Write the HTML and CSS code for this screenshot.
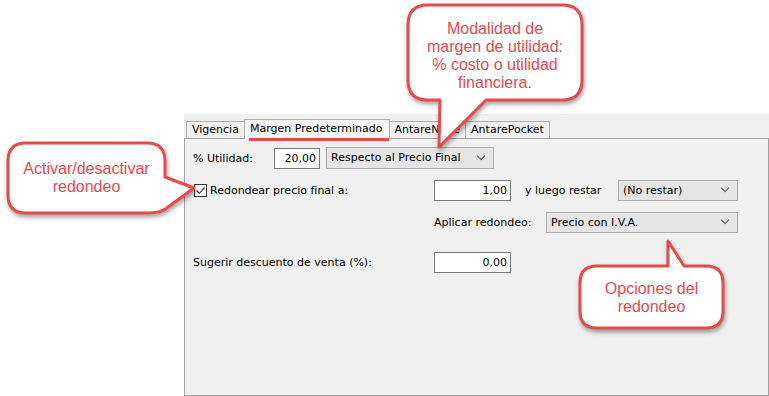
FILE: index.html
```html
<!DOCTYPE html>
<html lang="es">
<head>
<meta charset="utf-8">
<title>Margen Predeterminado</title>
<link rel="stylesheet" href="styles.css">
</head>
<body>
<div class="window">
  <div class="tabs">
    <div class="tab">Vigencia</div>
    <div class="tab active">Margen Predeterminado</div>
    <div class="tab">AntareNube</div>
    <div class="tab">AntarePocket</div>
  </div>
  <div class="panel">
    <div class="row r1">
      <span class="lbl w81">% Utilidad:</span>
      <span class="field w46">20,00</span>
      <span class="select w168 ml6">Respecto al Precio Final<i class="chev"></i></span>
    </div>
    <div class="row r2">
      <span class="lbl w241 chk"><span class="box"><svg width="11" height="11" viewBox="0 0 11 11"><path d="M1.5 5.5 L4.3 8.3 L9.7 2.6" fill="none" stroke="#333" stroke-width="1.1"/></svg></span>Redondear precio final a:</span>
      <span class="field w77">1,00</span>
      <span class="lbl w93 ml14">y luego restar</span>
      <span class="select w120">(No restar)<i class="chev"></i></span>
    </div>
    <div class="row r3">
      <span class="lbl w241"></span>
      <span class="lbl w112">Aplicar redondeo:</span>
      <span class="select w192">Precio con I.V.A.<i class="chev"></i></span>
    </div>
    <div class="row r4">
      <span class="lbl w241">Sugerir descuento de venta (%):</span>
      <span class="field w77">0,00</span>
    </div>
  </div>
</div>

<svg class="callouts" width="769" height="396" viewBox="0 0 769 396">
  <path d="M26,143 H147 Q165,143 165,161 V177 L194,188 L168,207 Q162,213 147,213 H26 Q8,213 8,195 V161 Q8,143 26,143 Z"/>
  <path d="M428,5 H562 Q582,5 582,25 V80 Q582,100 562,100 H486 L439,147 L440,100 H428 Q408,100 408,80 V25 Q408,5 428,5 Z"/>
  <path d="M597,266 H668 L668,241 L684,266 H706 Q723,266 723,283 V311 Q723,328 706,328 H597 Q580,328 580,311 V283 Q580,266 597,266 Z"/>
</svg>
<div class="note n1">Activar/desactivar<br>redondeo</div>
<div class="note n2">Modalidad de<br>margen de utilidad:<br>% costo o utilidad<br>financiera.</div>
<div class="note n3">Opciones del<br>redondeo</div>
</body>
</html>
```
FILE: styles.css
```css
html, body {
  margin: 0;
  padding: 0;
  background: #ffffff;
}
body {
  width: 769px;
  height: 396px;
  position: relative;
  overflow: hidden;
  font-family: "DejaVu Sans", sans-serif;
  font-size: 11px;
  color: #000;
}
.window {
  margin: 114px 0 0 184px;
  width: 585px;
  height: 282px;
  background: #f0f0f0;
  display: flex;
  flex-direction: column;
}
.tabs {
  display: flex;
  align-items: flex-end;
  height: 24px;
  padding-left: 2px;
  position: relative;
  z-index: 1;
}
.tab {
  height: 16px;
  line-height: 16px;
  padding: 0 5px;
  border: 1px solid #adadad;
  border-bottom: none;
  margin-right: -1px;
  background: #f0f0f0;
}
.tab.active {
  height: 19px;
  line-height: 18px;
  margin-bottom: -1px;
  padding: 0 6px 0 5px;
  background: #f7f7f7;
  position: relative;
}
.tab.active::after {
  content: "";
  position: absolute;
  left: 4px;
  right: 0;
  bottom: -2px;
  height: 3px;
  background: #e84a4a;
}
.panel {
  flex: 1;
  border: 1px solid #a0a0a0;
  padding: 8px 0 0 8px;
}
.row {
  display: flex;
  align-items: center;
}
.r1 { height: 22px; }
.r2 { height: 22px; margin-top: 10px; }
.r3 { height: 22px; margin-top: 10px; }
.r4 { height: 22px; margin-top: 18px; }
.lbl { display: block; white-space: nowrap; }
.w81 { width: 81px; }
.w241 { width: 241px; }
.w93 { width: 93px; }
.w112 { width: 112px; }
.ml14 { margin-left: 14px; }
.ml6 { margin-left: 6px; }
.chk { display: flex; align-items: center; }
.box {
  width: 11px;
  height: 11px;
  border: 1px solid #333;
  background: #fff;
  margin: 0 3px 0 1px;
  display: flex;
}
.field {
  border: 1px solid #7a7a7a;
  background: #fff;
  text-align: right;
  padding-right: 3px;
  box-sizing: border-box;
  height: 21px;
  line-height: 19px;
}
.w46 { width: 46px; }
.w77 { width: 77px; }
.select {
  height: 22px;
  line-height: 20px;
  border: 1px solid #adadad;
  background: #e5e5e5;
  box-sizing: border-box;
  padding-left: 4px;
  position: relative;
}
.r2 .select, .r3 .select { height: 21px; line-height: 19px; }
.w168 { width: 168px; }
.w120 { width: 120px; }
.w192 { width: 192px; }
.chev {
  position: absolute;
  right: 9px;
  top: 50%;
  width: 5px;
  height: 5px;
  margin-top: -5px;
  border-right: 1px solid #555;
  border-bottom: 1px solid #555;
  transform: rotate(45deg);
}
.callouts {
  position: absolute;
  left: 0;
  top: 0;
  z-index: 2;
  pointer-events: none;
  filter: drop-shadow(1px 3px 2px rgba(0,0,0,0.35));
}
.callouts path {
  fill: #ffffff;
  stroke: #e84a4a;
  stroke-width: 3;
  stroke-linejoin: round;
}
.note {
  position: absolute;
  z-index: 3;
  font-family: "Liberation Sans", Arial, sans-serif;
  font-size: 16px;
  line-height: 18px;
  color: #e9494d;
  text-align: center;
}
.n1 { left: 8px; width: 157px; top: 160px; }
.n2 { left: 408px; width: 174px; top: 20px; }
.n3 { left: 580px; width: 143px; top: 280px; }
```
